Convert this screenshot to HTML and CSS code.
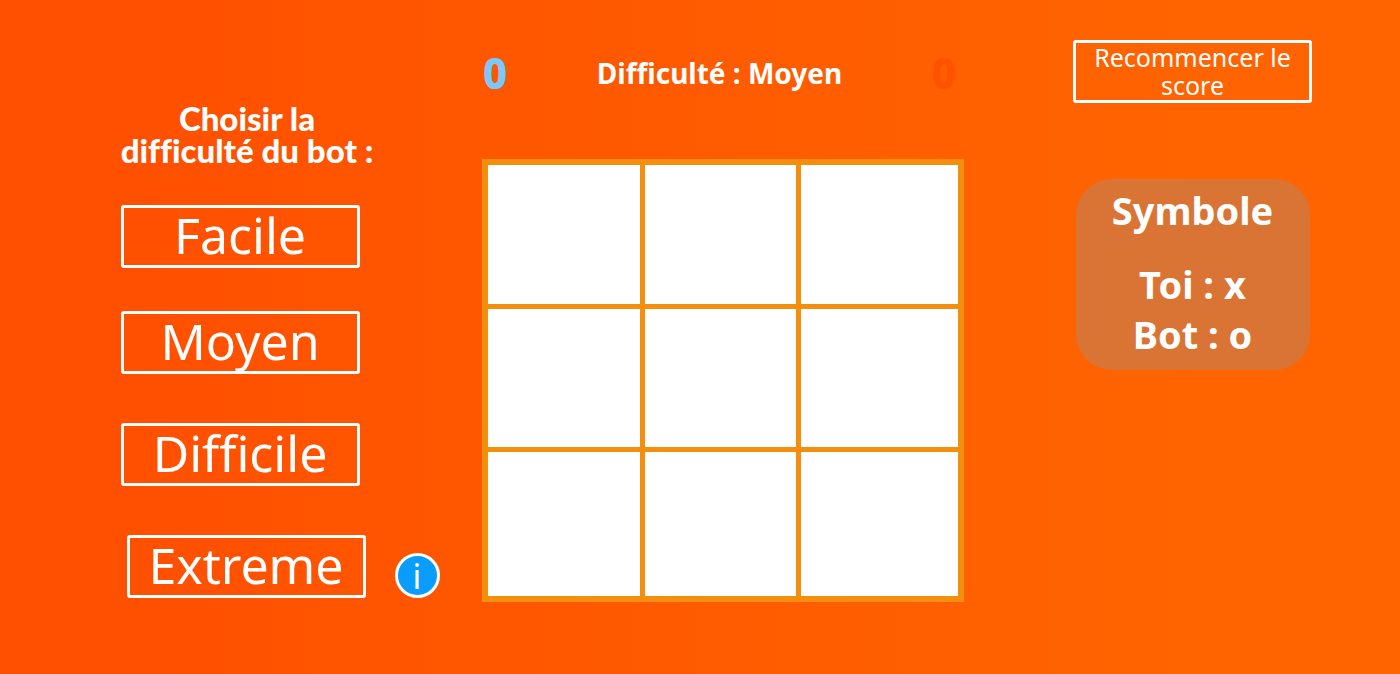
FILE: index.html
```html
<!DOCTYPE html>
<html lang="fr">
<head>
<meta charset="utf-8">
<meta name="viewport" content="width=device-width, initial-scale=1">
<title>Morpion</title>
<link rel="stylesheet" href="styles.css">
</head>
<body>
<main class="game">
  <section class="levels">
    <h2 class="levels-title">Choisir la<br>difficulté du bot :</h2>
    <div class="levels-list">
      <button type="button" class="btn">Facile</button>
      <button type="button" class="btn">Moyen</button>
    </div>
    <div class="levels-list levels-list-hard">
      <button type="button" class="btn">Difficile</button>
      <div class="levels-extreme">
        <button type="button" class="btn">Extreme</button>
        <button type="button" class="info">i</button>
      </div>
    </div>
  </section>

  <section class="play">
    <header class="scores">
      <span class="score score-player">0</span>
      <h1 class="current-level">Difficulté : Moyen</h1>
      <span class="score score-bot">0</span>
    </header>
    <div class="board">
      <button type="button" class="cell" aria-label="Case 1"></button>
      <button type="button" class="cell" aria-label="Case 2"></button>
      <button type="button" class="cell" aria-label="Case 3"></button>
      <button type="button" class="cell" aria-label="Case 4"></button>
      <button type="button" class="cell" aria-label="Case 5"></button>
      <button type="button" class="cell" aria-label="Case 6"></button>
      <button type="button" class="cell" aria-label="Case 7"></button>
      <button type="button" class="cell" aria-label="Case 8"></button>
      <button type="button" class="cell" aria-label="Case 9"></button>
    </div>
  </section>

  <aside class="side">
    <button type="button" class="btn btn-reset">Recommencer le score</button>
    <div class="symbols">
      <h2 class="symbols-title">Symbole</h2>
      <p class="symbols-line">Toi : x</p>
      <p class="symbols-line">Bot : o</p>
    </div>
  </aside>
</main>
</body>
</html>
```

FILE: styles.css
```css
* {
  box-sizing: border-box;
}

body {
  margin: 0;
  min-height: 100vh;
  background: linear-gradient(90deg, #ff5000 10%, #ff6400 85%);
  color: #fff;
  font-family: "Noto Sans", "Open Sans", sans-serif;
  font-variant-ligatures: none;
}

h1,
h2,
p {
  margin: 0;
}

button {
  padding: 0;
  font-family: inherit;
  font-variant-ligatures: inherit;
  color: inherit;
  cursor: pointer;
}

.game {
  display: grid;
  grid-template-columns: 482fr 482fr 436fr;
  align-items: start;
}

.btn {
  width: 239px;
  height: 63px;
  padding-bottom: 4px;
  border: 3px solid #fff;
  border-radius: 3px;
  background: transparent;
  font-size: 50px;
  line-height: 52px;
}

.levels {
  display: flex;
  flex-direction: column;
  align-items: center;
  padding: 102px 2px 0 0;
}

.levels-title {
  padding-left: 14px;
  font-family: Lato, sans-serif;
  font-size: 33px;
  font-weight: 900;
  line-height: 32px;
  text-align: center;
}

.levels-list {
  display: grid;
  gap: 43px;
  margin-top: 39px;
}

.levels-list-hard {
  gap: 49px;
  margin-top: 49px;
}

.levels-extreme {
  display: flex;
  align-items: center;
  gap: 29px;
  width: 239px;
  padding-left: 6px;
}

.levels-extreme .btn {
  flex-shrink: 0;
}

.info {
  flex-shrink: 0;
  width: 45px;
  height: 45px;
  margin-top: 18px;
  border: 3px solid #fff;
  border-radius: 50%;
  background: #0a9dff;
  font-size: 34px;
  line-height: 34px;
}

.play {
  padding-top: 45px;
}

.scores {
  display: flex;
  align-items: center;
  justify-content: space-between;
  height: 56px;
  padding: 0 8px 0 1px;
}

.score {
  font-size: 42px;
  font-weight: 800;
  line-height: 56px;
}

.score-player {
  color: #7cc8fb;
}

.score-bot {
  color: #ff5200;
}

.current-level {
  font-size: 28px;
  font-weight: 700;
  line-height: 52px;
}

.board {
  display: grid;
  grid-template-columns: repeat(3, 1fr);
  grid-template-rows: repeat(3, 1fr);
  aspect-ratio: 482 / 443;
  margin-top: 58px;
  border: 6px solid #f38f0d;
}

.cell {
  border: 0 solid #f38f0d;
  border-width: 0 5px 5px 0;
  border-radius: 0;
  background: #fff;
}

.cell:nth-child(3n) {
  border-right-width: 0;
}

.cell:nth-child(n + 7) {
  border-bottom-width: 0;
}

.side {
  display: flex;
  flex-direction: column;
  align-items: center;
  padding: 40px 0 0 21px;
}

.btn-reset {
  padding: 0 12px 2px;
  font-size: 25px;
  line-height: 28px;
}

.symbols {
  width: 234px;
  margin-top: 76px;
  padding: 6px 0 11px;
  border-radius: 36px;
  background: #da7435;
  text-align: center;
}

.symbols-title,
.symbols-line {
  font-size: 38px;
  font-weight: 700;
  line-height: 50px;
}

.symbols-title {
  margin-bottom: 24px;
}
```
